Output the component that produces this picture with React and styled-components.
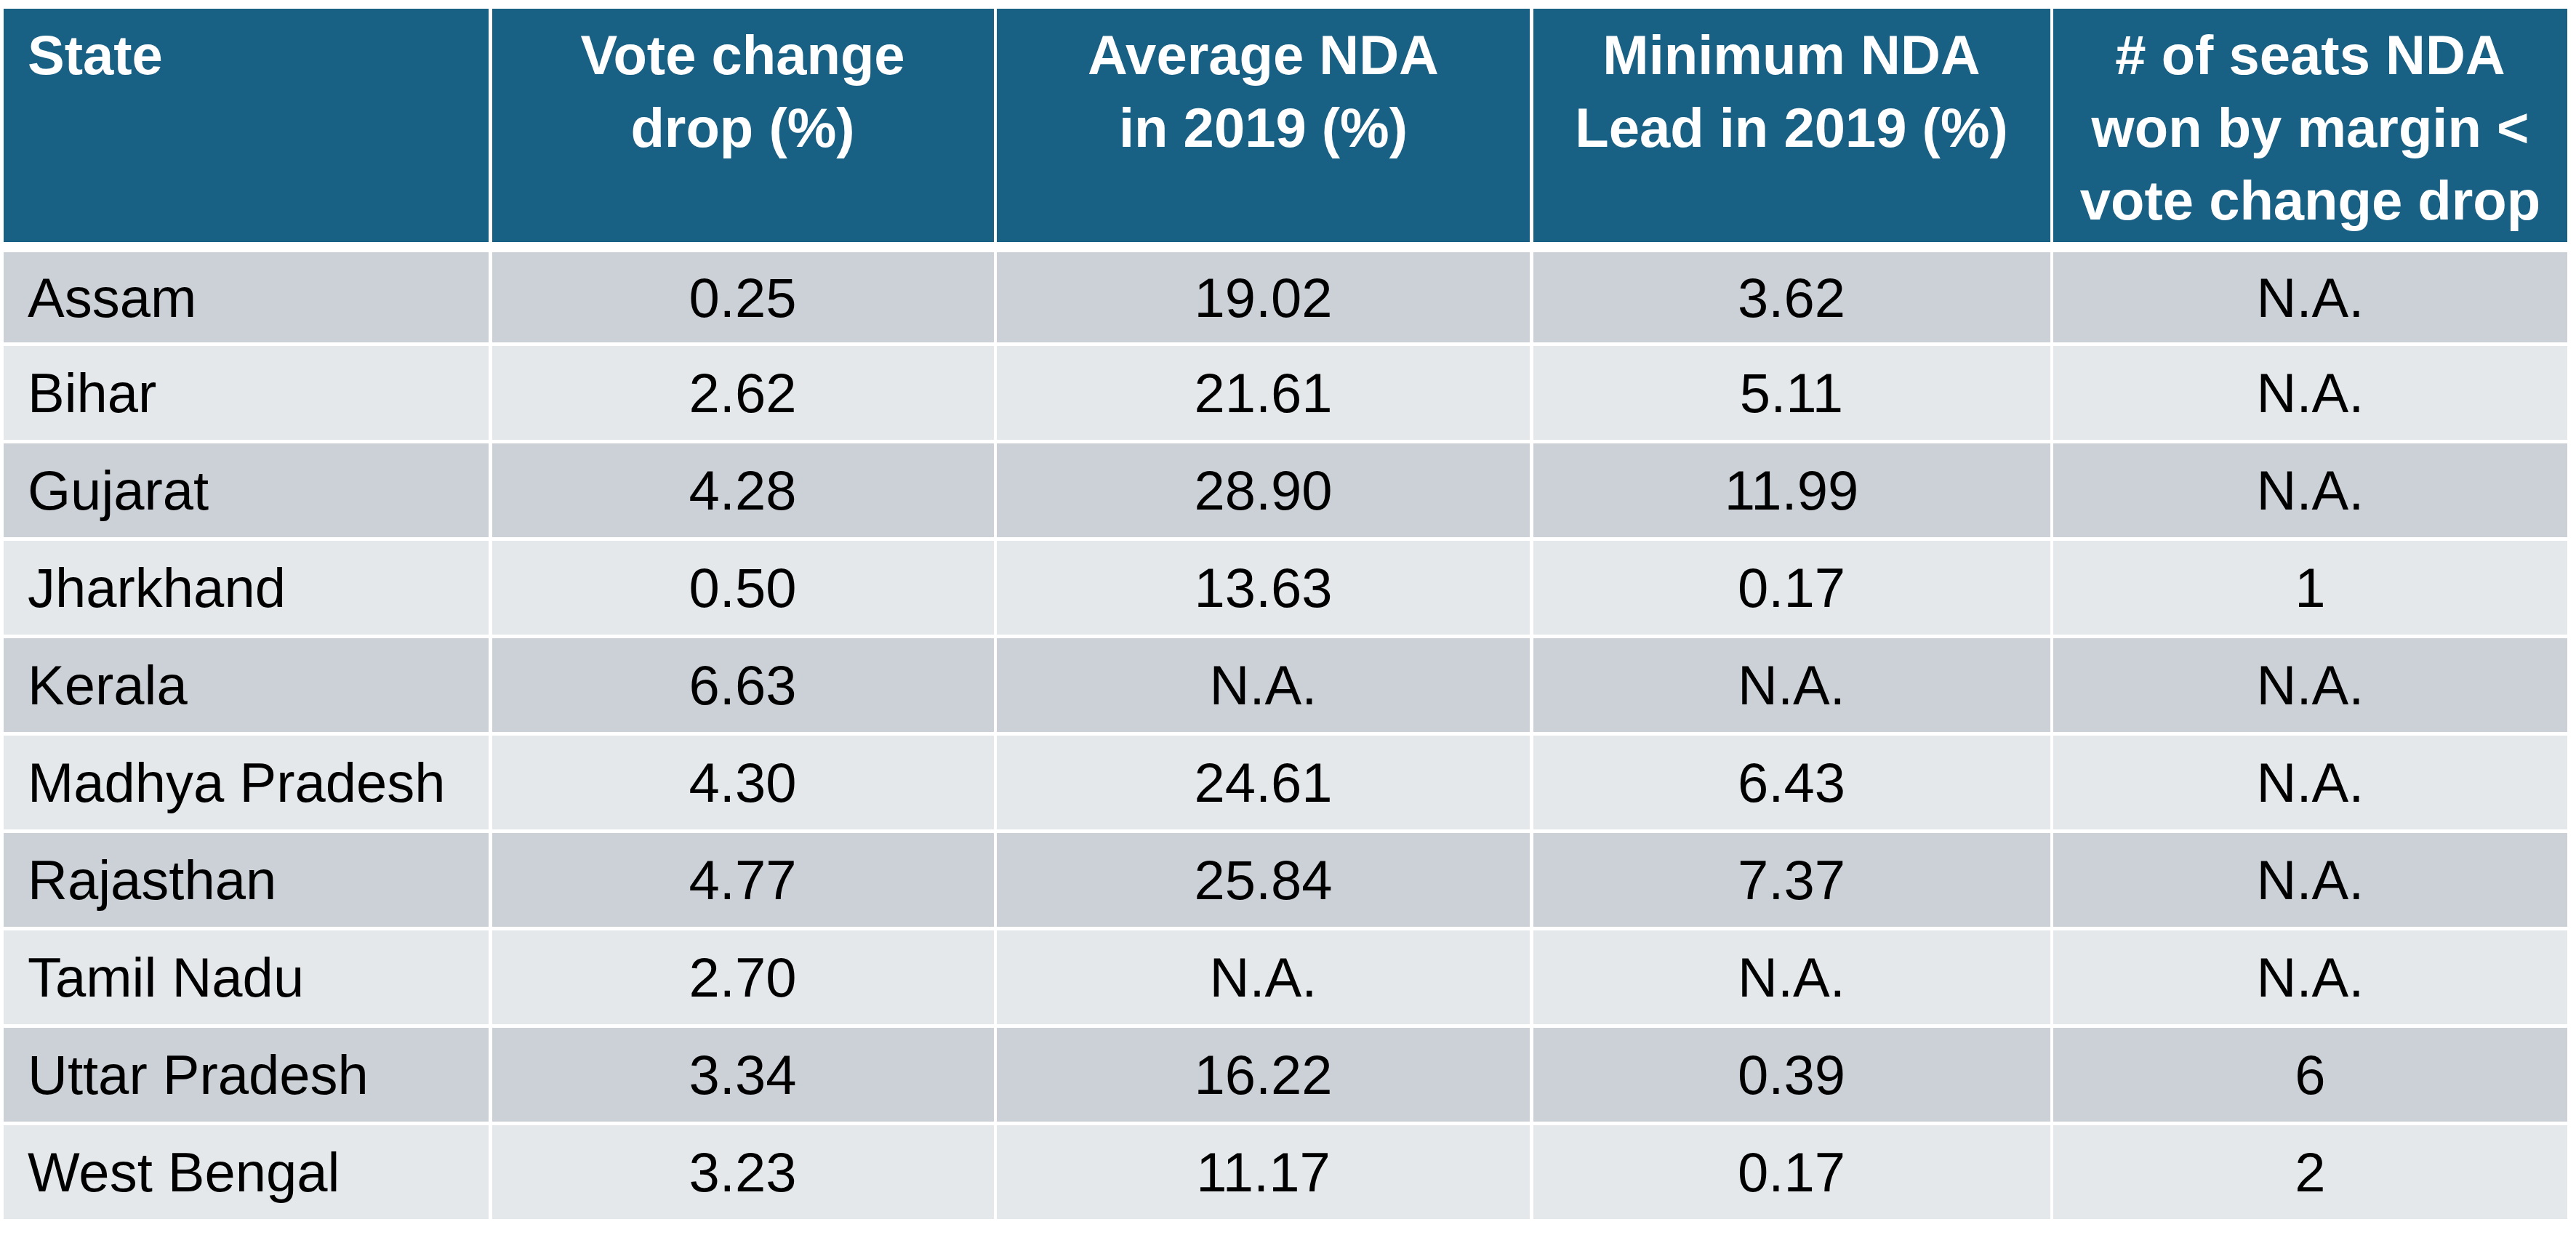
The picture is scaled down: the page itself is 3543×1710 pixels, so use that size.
import React from "react";
import styled, { createGlobalStyle } from "styled-components";

const GlobalStyle = createGlobalStyle`
  html, body {
    margin: 0;
    padding: 0;
    background: #ffffff;
  }
  body {
    font-family: "Liberation Sans", Arial, sans-serif;
  }
`;

const Page = styled.div`
  padding: 12px 0 0 5px;
  width: 3543px;
  height: 1710px;
  box-sizing: border-box;
`;

// header row carries its own 9px white strip below, so the rule under
// the header reads thicker than the others
const Grid = styled.div`
  display: grid;
  grid-template-columns: 667px 690px 733px 711px 707px;
  grid-template-rows: 330px 124px repeat(9, 129px);
  column-gap: 4.5px;
  row-gap: 5px;
  width: max-content;
  background: #ffffff;
`;

const HeadCell = styled.div`
  background: #186084;
  color: #ffffff;
  font-weight: 700;
  font-size: 76px;
  line-height: 100px;
  padding: 14px 33px 0;
  margin-bottom: 9px;
  white-space: nowrap;
  text-align: ${(p) => (p.$left ? "left" : "center")};
`;

const Cell = styled.div`
  display: flex;
  align-items: center;
  justify-content: ${(p) => (p.$left ? "flex-start" : "center")};
  padding: 0 33px;
  background: ${(p) => (p.$odd ? "#ccd1d8" : "#e4e8eb")};
  color: #000000;
  font-size: 76px;
  white-space: nowrap;
`;

const headers = [
  ["State"],
  ["Vote change", "drop (%)"],
  ["Average NDA", "in 2019 (%)"],
  ["Minimum NDA", "Lead in 2019 (%)"],
  ["# of seats NDA", "won by margin <", "vote change drop"],
];

const rows = [
  ["Assam", "0.25", "19.02", "3.62", "N.A."],
  ["Bihar", "2.62", "21.61", "5.11", "N.A."],
  ["Gujarat", "4.28", "28.90", "11.99", "N.A."],
  ["Jharkhand", "0.50", "13.63", "0.17", "1"],
  ["Kerala", "6.63", "N.A.", "N.A.", "N.A."],
  ["Madhya Pradesh", "4.30", "24.61", "6.43", "N.A."],
  ["Rajasthan", "4.77", "25.84", "7.37", "N.A."],
  ["Tamil Nadu", "2.70", "N.A.", "N.A.", "N.A."],
  ["Uttar Pradesh", "3.34", "16.22", "0.39", "6"],
  ["West Bengal", "3.23", "11.17", "0.17", "2"],
];

const App = () => {
  return (
    <>
      <GlobalStyle />
      <Page>
        <Grid>
          {headers.map((lines, i) => (
            <HeadCell key={i} $left={i === 0}>
              {lines.map((l, j) => (
                <div key={j}>{l}</div>
              ))}
            </HeadCell>
          ))}
          {rows.map((row, r) =>
            row.map((val, c) => (
              <Cell key={r + "-" + c} $left={c === 0} $odd={r % 2 === 0}>
                {val}
              </Cell>
            ))
          )}
        </Grid>
      </Page>
    </>
  );
};

export default App;
